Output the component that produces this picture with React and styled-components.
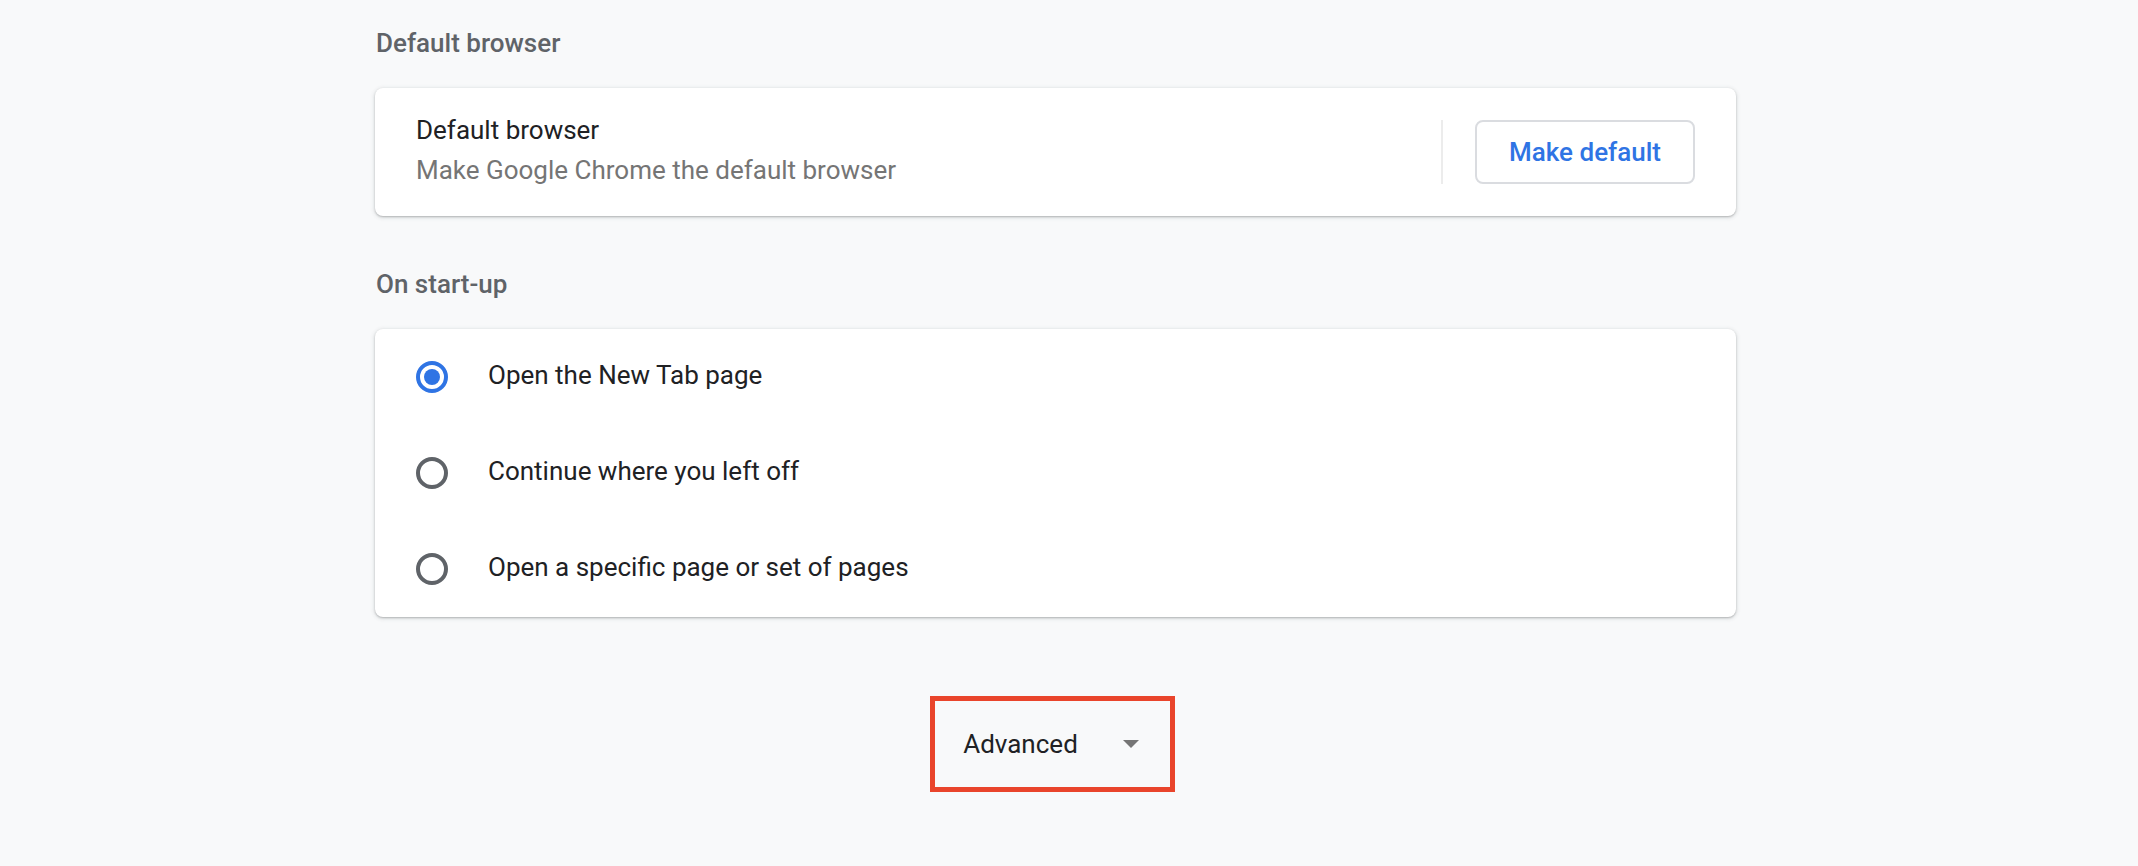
import React from "react";
import styled, { createGlobalStyle } from "styled-components";

// Chrome settings page: default browser + on start-up sections

const GlobalStyle = createGlobalStyle`
  html, body {
    margin: 0;
    padding: 0;
    background: #f8f9fa;
    font-family: Roboto, "Liberation Sans", Arial, sans-serif;
  }
`;

const Page = styled.div`
  min-height: 866px;
  background: #f8f9fa;
  padding: 23px 0 0 375px;
  box-sizing: border-box;
`;

const Column = styled.div`
  width: 1361px;
  display: flex;
  flex-direction: column;
`;

const Section = styled.section`
  display: flex;
  flex-direction: column;
  margin-top: ${(props) => (props.first ? "0" : "48px")};
`;

const Heading = styled.h2`
  margin: 0 0 25px 1px;
  font-size: 26px;
  line-height: 40px;
  font-weight: 500;
  color: #5f6368;
`;

const Card = styled.div`
  background: #fff;
  border-radius: 8px;
  box-shadow: 0 1px 2px rgba(60, 64, 67, 0.3), 0 1px 4px 1px rgba(60, 64, 67, 0.12);
`;

const Row = styled.div`
  display: flex;
  align-items: center;
  padding: 24px 41px;
`;

const Texts = styled.div`
  flex: 1;
  display: flex;
  flex-direction: column;
  margin: -2px 0 2px;
`;

const Title = styled.div`
  font-size: 26px;
  line-height: 40px;
  color: #202124;
`;

const Sub = styled.div`
  font-size: 26px;
  line-height: 40px;
  color: #757575;
`;

const Separator = styled.div`
  width: 2px;
  height: 64px;
  background: #ececec;
  margin: 0 32px;
`;

const Button = styled.button`
  height: 64px;
  padding: 0 32px;
  border: 2px solid #dadce0;
  border-radius: 8px;
  background: #fff;
  color: #2f74e4;
  font-family: inherit;
  font-size: 26px;
  font-weight: 500;
  cursor: pointer;
`;

const Option = styled.label`
  display: flex;
  align-items: center;
  height: 96px;
  padding-left: 41px;
  font-size: 26px;
  color: #202124;
  cursor: pointer;
`;

const OptionText = styled.span`
  margin-bottom: 4px;
`;

const Radio = styled.span`
  width: 32px;
  height: 32px;
  box-sizing: border-box;
  border-radius: 50%;
  border: 4px solid ${(props) => (props.checked ? "#2f74e4" : "#5f6368")};
  margin-right: 40px;
  display: flex;
  align-items: center;
  justify-content: center;
  flex-shrink: 0;

  &::after {
    content: "";
    width: 16px;
    height: 16px;
    border-radius: 50%;
    background: #2f74e4;
    display: ${(props) => (props.checked ? "block" : "none")};
  }
`;

const AdvancedWrap = styled.div`
  display: flex;
  justify-content: center;
  margin-top: 79px;
  padding-right: 6px;
`;

const Advanced = styled.button`
  display: flex;
  align-items: center;
  height: 96px;
  box-sizing: border-box;
  padding: 0 31px 0 28px;
  border: 5px solid #e9442b;
  background: transparent;
  font-family: inherit;
  font-size: 26px;
  color: #202124;
  cursor: pointer;

  svg {
    margin-left: 45px;
  }
`;

const options = [
  { label: "Open the New Tab page", checked: true },
  { label: "Continue where you left off", checked: false },
  { label: "Open a specific page or set of pages", checked: false },
];

const App = () => {
  return (
    <>
      <GlobalStyle />
      <Page>
        <Column>
          <Section first>
            <Heading>Default browser</Heading>
            <Card>
              <Row>
                <Texts>
                  <Title>Default browser</Title>
                  <Sub>Make Google Chrome the default browser</Sub>
                </Texts>
                <Separator />
                <Button>Make default</Button>
              </Row>
            </Card>
          </Section>
          <Section>
            <Heading>On start-up</Heading>
            <Card>
              {options.map((o) => (
                <Option key={o.label}>
                  <Radio checked={o.checked} />
                  <OptionText>{o.label}</OptionText>
                </Option>
              ))}
            </Card>
          </Section>
          <AdvancedWrap>
            <Advanced>
              Advanced
              <svg width="16" height="8" viewBox="0 0 16 8">
                <path d="M0 0 L16 0 L8 8 Z" fill="#757575" />
              </svg>
            </Advanced>
          </AdvancedWrap>
        </Column>
      </Page>
    </>
  );
};

export default App;
